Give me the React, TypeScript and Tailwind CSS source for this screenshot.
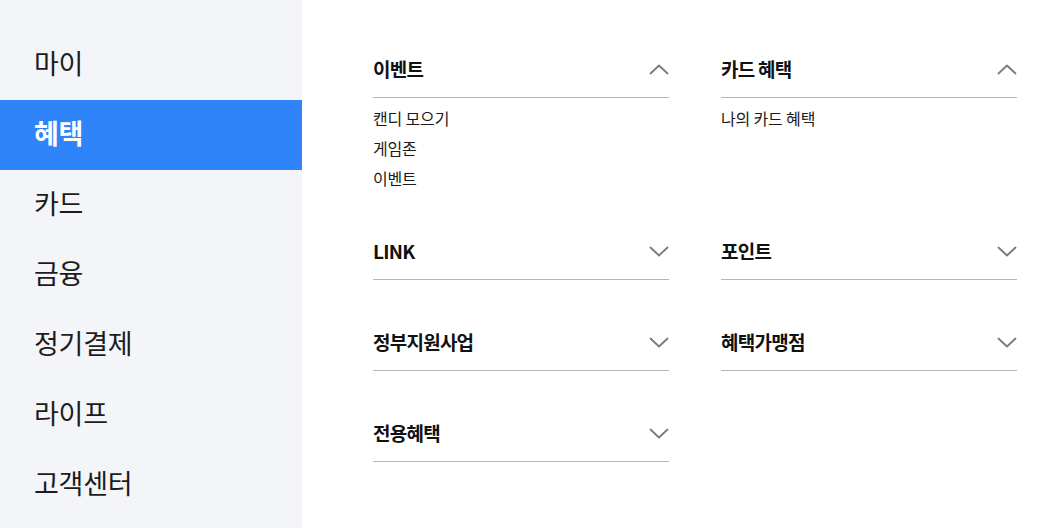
const menu = ['마이', '혜택', '카드', '금융', '정기결제', '라이프', '고객센터'];

type Section = {
  title: string;
  open?: boolean;
  items?: string[];
};

const sections: Section[] = [
  { title: '이벤트', open: true, items: ['캔디 모으기', '게임존', '이벤트'] },
  { title: '카드 혜택', open: true, items: ['나의 카드 혜택'] },
  { title: 'LINK' },
  { title: '포인트' },
  { title: '정부지원사업' },
  { title: '혜택가맹점' },
  { title: '전용혜택' },
];

function Chevron({ up }: { up?: boolean }) {
  return (
    <svg width="20" height="11" viewBox="0 0 20 11" fill="none" className="shrink-0">
      <polyline
        points={up ? '1.5,9.5 10,1.5 18.5,9.5' : '1.5,1.5 10,9.5 18.5,1.5'}
        stroke="#7a7a7a"
        strokeWidth="1.8"
        strokeLinecap="round"
        strokeLinejoin="round"
      />
    </svg>
  );
}

export default function App() {
  const active = '혜택';

  return (
    <div
      className="flex h-[528px] w-full overflow-hidden bg-white text-[#222]"
      style={{ fontFamily: '"Noto Sans CJK KR", "Noto Sans", sans-serif' }}
    >
      <nav className="w-[302px] shrink-0 bg-[#f4f5f9] pt-[30px]">
        {menu.map((label) => (
          <div
            key={label}
            className={
              label === active
                ? 'flex h-[70px] items-center bg-[#3084fa] pb-[3px] pl-[34px] text-[27px] font-bold tracking-[-0.01em] text-white'
                : 'flex h-[70px] items-center pb-[3px] pl-[34px] text-[27px] tracking-[-0.01em] text-[#1c1c1c]'
            }
          >
            {label}
          </div>
        ))}
      </nav>

      <main className="flex-1 pl-[71px] pt-[42px]">
        <div className="grid w-[644px] grid-cols-2 items-start gap-x-[52px]">
          {sections.map((s) => (
            <section key={s.title} className={s.open ? 'mb-[31px]' : 'mb-[35px]'}>
              <div className="flex h-[56px] items-center justify-between border-b border-[#b7b7b7] pb-[1px]">
                <span className="text-[19px] font-bold tracking-[-0.04em] text-[#111]">{s.title}</span>
                <Chevron up={s.open} />
              </div>
              {s.open && (
                <ul className="pt-[5px]">
                  {s.items?.map((item) => (
                    <li key={item} className="text-[16px] leading-[30px] tracking-[-0.01em] text-[#1a1a1a]">
                      {item}
                    </li>
                  ))}
                </ul>
              )}
            </section>
          ))}
        </div>
      </main>
    </div>
  );
}
